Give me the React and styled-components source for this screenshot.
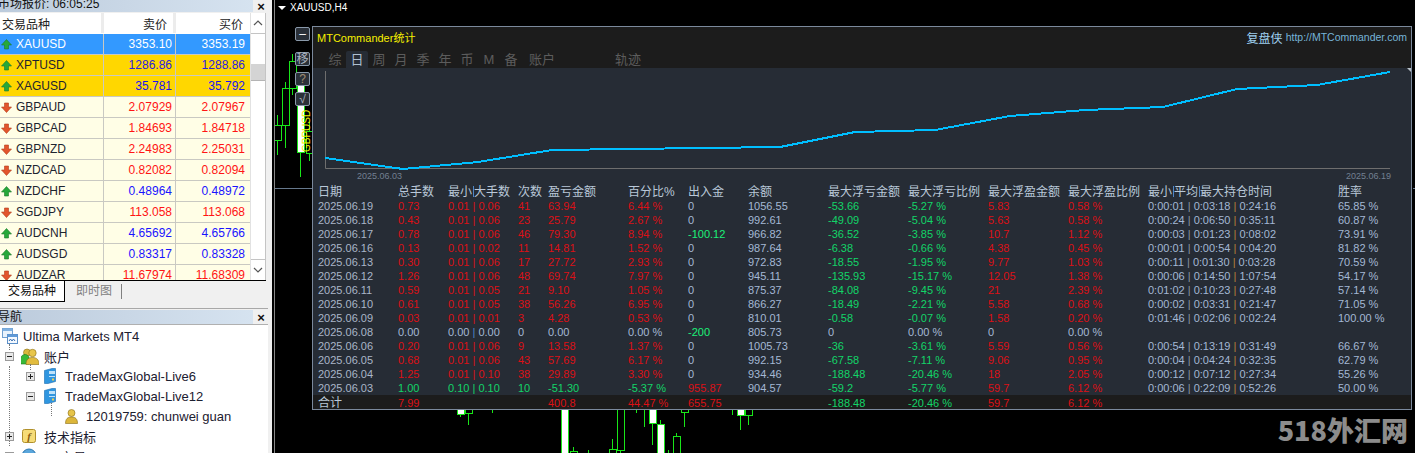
import React from 'react'
import styled, { createGlobalStyle } from 'styled-components'

const GlobalStyle = createGlobalStyle`
  html, body {
    margin: 0;
    padding: 0;
    height: 453px;
    overflow: hidden;
    background: #000;
    font-family: "Liberation Sans", "Noto Sans CJK SC", sans-serif;
  }
`

const Page = styled.div`
  width: 1415px;
  height: 453px;
  display: flex;
  overflow: hidden;
`
const Sidebar = styled.div`
  width: 272px;
  height: 453px;
  flex: none;
  background: #f0f0f0;
  display: flex;
  flex-direction: column;
  overflow: hidden;
`
const TitleBar = styled.div`
  height: ${p => p.$height}px;
  margin-top: ${p => p.$top || 0}px;
  flex: none;
  display: flex;
  align-items: ${p => p.$align || 'center'};
  justify-content: space-between;
  overflow: hidden;
`
const TitleFill = styled.div`
  width: 253px;
  height: 100%;
  background: linear-gradient(90deg, #bccbdc, #d6e3f0);
  font-size: 12px;
  line-height: ${p => p.$line}px;
  color: #111;
  white-space: nowrap;
  overflow: hidden;
  text-indent: ${p => p.$indent || 0}px;
  letter-spacing: ${p => p.$spacing || 0}px;
`
const CloseX = styled.span`
  width: 16px;
  margin-right: 3px;
  text-align: center;
  font-size: 13px;
  line-height: 100%;
  font-weight: 700;
  color: #111;
`
const WatchBody = styled.div`
  height: 267px;
  margin-top: 1px;
  margin-right: 6px;
  display: flex;
  background: #fff;
  overflow: hidden;
  flex: none;
`
const WatchTable = styled.div`
  width: 250px;
  flex: none;
  overflow: hidden;
`
const WatchRow = styled.div`
  height: 21px;
  box-sizing: border-box;
  display: grid;
  grid-template-columns: 104px 72px 74px;
  background: ${p => p.$bg || '#fffee6'};
  border-bottom: 1px solid #c9c9c2;
  color: ${p => p.$color};
  font-size: 12px;
`
const HeadRow = styled(WatchRow)`
  height: 20px;
  margin-bottom: 1px;
  background: #fff;
  border-bottom: none;
  color: #222;
  font-size: 12px;
`
const NameCell = styled.div`
  display: flex;
  align-items: center;
  gap: 4px;
  padding-left: 1px;
  color: ${p => p.$color || '#1d2430'};
  border-right: 1px solid #c9c9c2;
  white-space: nowrap;
`
const PriceCell = styled.div`
  display: flex;
  align-items: center;
  justify-content: flex-end;
  padding-right: ${p => (p.$last ? 5 : 3)}px;
  border-right: ${p => (p.$last ? 'none' : '1px solid #c9c9c2')};
  white-space: nowrap;
`
const HeadName = styled(NameCell)`
  padding-left: 2px;
  border-right: 3px solid #ececec;
  color: #222;
`
const HeadPrice = styled(PriceCell)`
  padding-right: ${p => (p.$last ? 7 : 6)}px;
  border-right: ${p => (p.$last ? 'none' : '3px solid #ececec')};
`
const ScrollBar = styled.div`
  width: 16px;
  flex: none;
  background: #fff;
  border-left: 1px solid #e2e2e2;
  border-right: 1px solid #c4c4c4;
  box-sizing: border-box;
  display: flex;
  flex-direction: column;
  justify-content: space-between;
  position: relative;
`
const ScrollCap = styled.div`
  height: 20px;
  display: flex;
  align-items: center;
  justify-content: center;
  border-bottom: ${p => (p.$top ? '1px solid #c4c4c4' : 'none')};
  border-top: ${p => (p.$top ? 'none' : '1px solid #c4c4c4')};
`
const ScrollThumb = styled.div`
  position: absolute;
  top: 51px;
  left: 0;
  right: 0;
  height: 16px;
  background: #d4d4d4;
  border-bottom: 1px solid #b4b4b4;
`
const TabStrip = styled.div`
  height: 22px;
  flex: none;
  margin-right: 6px;
  border-top: 1px solid #000;
  box-sizing: border-box;
  display: flex;
  align-items: center;
  font-size: 12px;
`
const ActiveTab = styled.div`
  width: 65px;
  height: 21px;
  box-sizing: border-box;
  background: #fff;
  border-right: 1px solid #000;
  border-bottom: 1px solid #000;
  padding-left: 8px;
  line-height: 20px;
  color: #111;
`
const IdleTab = styled.div`
  width: 57px;
  height: 15px;
  box-sizing: border-box;
  padding-left: 11px;
  line-height: 15px;
  color: #808080;
  border-right: 1px solid #808080;
`
const Divider = styled.div`
  height: 6px;
  flex: none;
  border-bottom: 1px solid #a8a8a8;
  margin-right: 4px;
`
const NavBody = styled.div`
  flex: 1;
  background: #fff;
  margin-right: 4px;
  padding-top: 1px;
  border-top: 1px solid #b0b0b0;
  overflow: hidden;
`
const TreeRow = styled.div`
  height: 20px;
  position: relative;
  display: flex;
  align-items: center;
  padding-left: ${p => p.$indent}px;
  font-size: 13px;
  color: #1c2030;
  white-space: nowrap;
`
const Guide = styled.i`
  position: absolute;
  left: ${p => p.$left}px;
  top: ${p => p.$top}px;
  height: ${p => p.$height}px;
  border-left: 1px dotted #777;
`
const Expander = styled.span`
  width: 9px;
  height: 9px;
  box-sizing: border-box;
  border: 1px solid #9a9a9a;
  background: #e8e8e8;
  position: relative;
  flex: none;
  margin-right: ${p => p.$gap}px;
  &::before {
    content: '';
    position: absolute;
    left: 1px;
    right: 1px;
    top: 3px;
    height: 1px;
    background: #222;
  }
  &::after {
    content: '';
    display: ${p => (p.$open ? 'none' : 'block')};
    position: absolute;
    top: 1px;
    bottom: 1px;
    left: 3px;
    width: 1px;
    background: #222;
  }
`
const TreeIcon = styled.svg`
  flex: none;
  margin-right: ${p => p.$gap}px;
`

const ChartPane = styled.div`
  flex: 1;
  margin-left: 2px;
  position: relative;
  background: #000;
  border-left: 1px solid #888;
  overflow: hidden;
`
const CandleLayer = styled.svg`
  position: absolute;
  left: 0;
  top: 0;
`
const ChartLabel = styled.div`
  position: absolute;
  left: 3px;
  top: 2px;
  display: flex;
  align-items: center;
  gap: 4px;
  font-size: 10px;
  line-height: 12px;
  color: #fff;
`
const DownCaret = styled.span`
  width: 0;
  height: 0;
  border-left: 4px solid transparent;
  border-right: 4px solid transparent;
  border-top: 4px solid #fff;
`
const SideButtons = styled.div`
  position: absolute;
  left: 20px;
  top: 27px;
  display: flex;
  flex-direction: column;
  gap: 6px;
`
const SideButton = styled.div`
  width: 15px;
  height: 14px;
  box-sizing: border-box;
  background: #2a3038;
  border: 1px solid #8a99aa;
  border-radius: 2px;
  margin-bottom: ${p => p.$after || 0}px;
  font-size: 12px;
  line-height: 12px;
  text-align: center;
  color: ${p => p.$color || '#aab4c0'};
`
const Watermark = styled.div`
  position: absolute;
  right: 7px;
  bottom: 6px;
  font-family: "Noto Sans CJK SC", sans-serif;
  font-size: 27px;
  line-height: 34px;
  font-weight: 900;
  color: #8c8c8c;
  white-space: nowrap;
`
const Panel = styled.div`
  position: absolute;
  left: 37px;
  top: 26px;
  width: 1100px;
  height: 384px;
  box-sizing: border-box;
  border: 1px solid #7b899c;
  background: #262c35;
  display: flex;
  flex-direction: column;
`
const PanelHead = styled.div`
  height: 41px;
  flex: none;
  background: #1c1c1c;
  display: flex;
  flex-direction: column;
`
const BrandRow = styled.div`
  height: 20px;
  flex: none;
  padding: 0 4px 0 4px;
  display: flex;
  align-items: center;
  justify-content: space-between;
`
const BrandTitle = styled.span`
  font-size: 11px;
  color: #f6f000;
`
const BrandLink = styled.span`
  display: flex;
  align-items: center;
  gap: 3px;
  font-size: 10.5px;
  color: #76b4d8;
  b {
    font-weight: 400;
    font-size: 12px;
    color: #9fd0f0;
  }
`
const TabRow = styled.div`
  height: 17px;
  flex: none;
  margin-top: 4px;
  padding-left: 11px;
  display: flex;
`
const PanelTab = styled.div`
  width: ${p => p.$width || 22}px;
  margin-left: ${p => p.$gap || 0}px;
  text-align: center;
  box-sizing: border-box;
  font-size: 13px;
  line-height: 17px;
  border-radius: 2px 2px 0 0;
  color: ${p => (p.$active ? '#aebfd0' : '#5c5c5c')};
  background: ${p => (p.$active ? '#262c35' : 'transparent')};
`
const Curve = styled.svg`
  flex: none;
  display: block;
`
const Grid = styled.div`
  display: grid;
  grid-template-columns: 80px 50px 70px 30px 80px 60px 60px 80px 80px 80px 80px 80px 190px 1fr;
  padding-left: 5px;
  white-space: nowrap;
`
const HeaderGrid = styled(Grid)`
  height: 14px;
  font-size: 12px;
  line-height: 14px;
  color: #b9c8d8;
`
const DataGrid = styled(Grid)`
  height: 14px;
  font-size: 11px;
  line-height: 14px;
`
const TotalGrid = styled(DataGrid)`
  background: #1c1c1c;
  margin-top: 0;
  height: 14px;
  line-height: 16px;
  font-size: 11px;
`
const Cell = styled.span`
  color: ${p => p.$color};
`
const TotalName = styled(Cell)`
  font-size: 12px;
  color: #b9c8d8;
`
const HeadSep = styled.span`
  display: inline-block;
  width: 1px;
  height: 11px;
  margin: 0 0 0 1px;
  background: #4f86c6;
  vertical-align: -1px;
`

const RED = '#dc1016'
const GREEN = '#12d468'
const BRIGHT = '#1cf078'
const SOFT = '#a4b8d4'
const DATE = '#aab6c8'

const watchRows = [
  { name: 'XAUUSD', sell: '3353.10', buy: '3353.19', up: true, bg: '#3399ff', color: '#fff', nameColor: '#fff' },
  { name: 'XPTUSD', sell: '1286.86', buy: '1288.86', up: true, bg: '#ffd700', color: '#2a22e0' },
  { name: 'XAGUSD', sell: '35.781', buy: '35.792', up: true, bg: '#ffd700', color: '#1a14f0' },
  { name: 'GBPAUD', sell: '2.07929', buy: '2.07967' },
  { name: 'GBPCAD', sell: '1.84693', buy: '1.84718' },
  { name: 'GBPNZD', sell: '2.24983', buy: '2.25031' },
  { name: 'NZDCAD', sell: '0.82082', buy: '0.82094' },
  { name: 'NZDCHF', sell: '0.48964', buy: '0.48972', up: true },
  { name: 'SGDJPY', sell: '113.058', buy: '113.068' },
  { name: 'AUDCNH', sell: '4.65692', buy: '4.65766', up: true },
  { name: 'AUDSGD', sell: '0.83317', buy: '0.83328', up: true },
  { name: 'AUDZAR', sell: '11.67974', buy: '11.68309' },
]

const columns = ['日期', '总手数', null, '次数', '盈亏金额', '百分比%', '出入金', '余额', '最大浮亏金额', '最大浮亏比例', '最大浮盈金额', '最大浮盈比例', 'times', '胜率']

const stats = [
  ['2025.06.19', '0.73', '0.01', '0.06', '41', '63.94', '6.44 %', '0', '1056.55', '-53.66', '-5.27 %', '5.83', '0.58 %', '0:00:01', '0:03:18', '0:24:16', '65.85 %'],
  ['2025.06.18', '0.43', '0.01', '0.06', '23', '25.79', '2.67 %', '0', '992.61', '-49.09', '-5.04 %', '5.63', '0.58 %', '0:00:24', '0:06:50', '0:35:11', '60.87 %'],
  ['2025.06.17', '0.78', '0.01', '0.06', '46', '79.30', '8.94 %', '-100.12', '966.82', '-36.52', '-3.85 %', '10.7', '1.12 %', '0:00:03', '0:01:23', '0:08:02', '73.91 %'],
  ['2025.06.16', '0.13', '0.01', '0.02', '11', '14.81', '1.52 %', '0', '987.64', '-6.38', '-0.66 %', '4.38', '0.45 %', '0:00:01', '0:00:54', '0:04:20', '81.82 %'],
  ['2025.06.13', '0.30', '0.01', '0.06', '17', '27.72', '2.93 %', '0', '972.83', '-18.55', '-1.95 %', '9.77', '1.03 %', '0:00:11', '0:01:30', '0:03:28', '70.59 %'],
  ['2025.06.12', '1.26', '0.01', '0.06', '48', '69.74', '7.97 %', '0', '945.11', '-135.93', '-15.17 %', '12.05', '1.38 %', '0:00:06', '0:14:50', '1:07:54', '54.17 %'],
  ['2025.06.11', '0.59', '0.01', '0.05', '21', '9.10', '1.05 %', '0', '875.37', '-84.08', '-9.45 %', '21', '2.39 %', '0:01:02', '0:10:23', '0:27:48', '57.14 %'],
  ['2025.06.10', '0.61', '0.01', '0.05', '38', '56.26', '6.95 %', '0', '866.27', '-18.49', '-2.21 %', '5.58', '0.68 %', '0:00:02', '0:03:31', '0:21:47', '71.05 %'],
  ['2025.06.09', '0.03', '0.01', '0.01', '3', '4.28', '0.53 %', '0', '810.01', '-0.58', '-0.07 %', '1.58', '0.20 %', '0:01:46', '0:02:06', '0:02:24', '100.00 %'],
  ['2025.06.08', '0.00', '0.00', '0.00', '0', '0.00', '0.00 %', '-200', '805.73', '0', '0.00 %', '0', '0.00 %', '', '', '', ''],
  ['2025.06.06', '0.20', '0.01', '0.06', '9', '13.58', '1.37 %', '0', '1005.73', '-36', '-3.61 %', '5.59', '0.56 %', '0:00:54', '0:13:19', '0:31:49', '66.67 %'],
  ['2025.06.05', '0.68', '0.01', '0.06', '43', '57.69', '6.17 %', '0', '992.15', '-67.58', '-7.11 %', '9.06', '0.95 %', '0:00:04', '0:04:24', '0:32:35', '62.79 %'],
  ['2025.06.04', '1.25', '0.01', '0.10', '38', '29.89', '3.30 %', '0', '934.46', '-188.48', '-20.46 %', '18', '2.05 %', '0:00:12', '0:07:12', '0:27:34', '55.26 %'],
  ['2025.06.03', '1.00', '0.10', '0.10', '10', '-51.30', '-5.37 %', '955.87', '904.57', '-59.2', '-5.77 %', '59.7', '6.12 %', '0:00:06', '0:22:09', '0:52:26', '50.00 %'],
]

const curve = [
  [325, 158], [403, 169], [478, 162], [552, 150], [628, 149], [703, 148], [780, 147], [855, 132],
  [935, 130], [1010, 116], [1085, 110], [1163, 107], [1237, 89], [1317, 85], [1390, 72],
]

// x, body top, body bottom, wick top, wick bottom, filled
const candles = [
  [276, 125, 140, 115, 155], [284, 88, 125, 82, 148], [291, 61, 88, 54, 95], [299, 85, 152, 85, 177, true], [308, 131, 153, 122, 161],
  [459, 409, 414, 409, 417, true], [467, 409, 413, 409, 425], [491, 409, 409, 409, 413], [563, 409, 454, 409, 454, true],
  [572, 451, 454, 447, 454], [587, 454, 454, 450, 454], [611, 449, 454, 439, 454], [619, 409, 450, 409, 454],
  [635, 409, 409, 409, 413], [643, 409, 409, 409, 427], [651, 409, 423, 409, 445, true], [659, 424, 454, 420, 454, true],
  [667, 454, 454, 450, 454], [675, 436, 454, 433, 454], [683, 409, 412, 409, 427],
  [731, 409, 409, 409, 415], [739, 409, 415, 409, 430, true], [747, 409, 415, 409, 425],
]

const TrendArrow = ({ up }) => (
  <svg width="11" height="11" viewBox="0 0 11 11" style={{ flex: 'none' }}>
    <path
      d={up ? 'M5.5 .5 10.5 6H7.5V10H3.5V6H.5Z' : 'M3.5 1H7.5V5H10.5L5.5 10.5 .5 5H3.5Z'}
      fill={up ? '#27a83a' : '#e2552c'}
      stroke={up ? '#1c7a2c' : '#b23c1c'}
      strokeWidth=".6"
    />
  </svg>
)

const ChevronMark = ({ up }) => (
  <svg width="10" height="6" viewBox="0 0 10 6">
    <path d={up ? 'M1 5 5 1 9 5' : 'M1 1 5 5 9 1'} fill="none" stroke="#555" strokeWidth="1.2" />
  </svg>
)

const WindowsIcon = () => (
  <TreeIcon width="16" height="16" viewBox="0 0 16 16" $gap={5}>
    <rect x=".5" y=".5" width="10" height="9" fill="#e8f2fc" stroke="#6f9fd0" />
    <rect x=".5" y=".5" width="10" height="2.5" fill="#7fb0e0" />
    <rect x="5.5" y="6.5" width="10" height="9" fill="#f4f9ff" stroke="#5b8fc8" />
    <rect x="5.5" y="6.5" width="10" height="2.5" fill="#5f9ad8" />
    <path d="M7 13l1.5-2 1.5 2 1.5-2 1.5 2" fill="none" stroke="#3a6fb0" />
  </TreeIcon>
)

const UsersIcon = () => (
  <TreeIcon width="18" height="17" viewBox="0 0 18 17" $gap={5}>
    <circle cx="6" cy="4.5" r="3.5" fill="#d9b83c" stroke="#8a6d14" strokeWidth=".6" />
    <path d="M0 16a4 5 0 0 1 8-7v7z" fill="#38b838" stroke="#1c7a1c" strokeWidth=".6" />
    <circle cx="11.5" cy="5" r="3.7" fill="#e8c64a" stroke="#8a6d14" strokeWidth=".6" />
    <path d="M5 16.5c0-5 2.5-7 6.5-7s6.5 2 6.5 7z" fill="#e2bc3e" stroke="#8a6d14" strokeWidth=".6" />
  </TreeIcon>
)

const ServerIcon = () => (
  <TreeIcon width="12" height="16" viewBox="0 0 12 16" $gap={9}>
    <path d="M.5 2.5 8 .5h3.5v13L4 15.5H.5z" fill="#2f96e0" stroke="#1a6cb0" strokeWidth=".6" />
    <rect x="5" y="3" width="6" height="3" fill="#bfe2fa" />
    <rect x="5" y="8" width="6" height="1" fill="#bfe2fa" />
    <rect x="8" y="10.5" width="2" height="2" fill="#f0d050" />
  </TreeIcon>
)

const UserIcon = () => (
  <TreeIcon width="13" height="15" viewBox="0 0 13 15" $gap={8}>
    <circle cx="6.5" cy="4" r="3.5" fill="#e6c44a" stroke="#8a6d14" strokeWidth=".6" />
    <path d="M.5 14.5c0-4.5 2-6.5 6-6.5s6 2 6 6.5z" fill="#dcb63a" stroke="#8a6d14" strokeWidth=".6" />
  </TreeIcon>
)

const FormulaIcon = () => (
  <TreeIcon width="14" height="14" viewBox="0 0 14 14" $gap={8}>
    <rect x=".5" y=".5" width="13" height="13" rx="2" fill="#f6dc78" stroke="#b0902c" />
    <text x="7" y="11" textAnchor="middle" fontSize="11" fontStyle="italic" fontWeight="700" fontFamily="Liberation Serif, serif" fill="#8a5c10">f</text>
  </TreeIcon>
)

const GlobeIcon = () => (
  <TreeIcon width="16" height="16" viewBox="0 0 16 16" $gap={6}>
    <circle cx="8" cy="8" r="7" fill="#5aa6dc" stroke="#2f78b0" />
  </TreeIcon>
)

const MarketWatch = () => (
  <>
    <TitleBar $height={12}>
      <TitleFill $line={8} $indent={-2}>市场报价: 06:05:25</TitleFill>
      <CloseX>×</CloseX>
    </TitleBar>
    <WatchBody>
      <WatchTable>
        <HeadRow>
          <HeadName>交易品种</HeadName>
          <HeadPrice>卖价</HeadPrice>
          <HeadPrice $last>买价</HeadPrice>
        </HeadRow>
        {watchRows.map(row => {
          const color = row.color || (row.up ? '#1a14ff' : '#ff1414')
          return (
            <WatchRow key={row.name} $bg={row.bg} $color={color}>
              <NameCell $color={row.nameColor}>
                <TrendArrow up={row.up} />
                {row.name}
              </NameCell>
              <PriceCell>{row.sell}</PriceCell>
              <PriceCell $last>{row.buy}</PriceCell>
            </WatchRow>
          )
        })}
      </WatchTable>
      <ScrollBar>
        <ScrollCap $top><ChevronMark up /></ScrollCap>
        <ScrollThumb />
        <ScrollCap><ChevronMark /></ScrollCap>
      </ScrollBar>
    </WatchBody>
    <TabStrip>
      <ActiveTab>交易品种</ActiveTab>
      <IdleTab>即时图</IdleTab>
    </TabStrip>
  </>
)

const Navigator = () => (
  <>
    <Divider />
    <TitleBar $height={14} $top={1}>
      <TitleFill $line={14} $indent={-2}>导航</TitleFill>
      <CloseX>×</CloseX>
    </TitleBar>
    <NavBody>
      <TreeRow $indent={2}><WindowsIcon />Ultima Markets MT4</TreeRow>
      <TreeRow $indent={5}>
        <Guide $left={9} $top={-2} $height={6} />
        <Expander $open $gap={7} />
        <UsersIcon />账户
      </TreeRow>
      <TreeRow $indent={26}>
        <Guide $left={9} $top={0} $height={80} />
        <Guide $left={30} $top={-2} $height={6} />
        <Expander $gap={9} />
        <ServerIcon />TradeMaxGlobal-Live6
      </TreeRow>
      <TreeRow $indent={26}>
        <Expander $open $gap={9} />
        <ServerIcon />TradeMaxGlobal-Live12
      </TreeRow>
      <TreeRow $indent={65}>
        <Guide $left={51} $top={-3} $height={13} />
        <UserIcon />12019759: chunwei guan
      </TreeRow>
      <TreeRow $indent={5}>
        <Expander $gap={8} />
        <FormulaIcon />技术指标
      </TreeRow>
      <TreeRow $indent={5}>
        <Expander $gap={7} />
        <GlobeIcon />EA交易
      </TreeRow>
    </NavBody>
  </>
)

const Candles = () => (
  <CandleLayer width="1141" height="453" viewBox="274 0 1141 453">
    {candles.map(([x, top, bottom, wickTop, wickBottom, filled]) => (
      <g key={x} shapeRendering="crispEdges">
        <line x1={x + 0.5} x2={x + 0.5} y1={wickTop} y2={wickBottom} stroke="#19e619" />
        {bottom > top && (
          <rect x={x - 3} y={top + 0.5} width="7" height={bottom - top} fill={filled ? '#fff' : '#000'} stroke="#19e619" />
        )}
      </g>
    ))}
    <text
      transform="rotate(-90 309 152)"
      x="309"
      y="152"
      fontSize="10"
      fontFamily="Liberation Sans, sans-serif"
      fill="#f4f000"
    >
      GBPUSD
    </text>
    <line x1="274" x2="313" y1="188.5" y2="188.5" stroke="#66788c" />
    <line x1="1412" x2="1415" y1="188.5" y2="188.5" stroke="#66788c" />
    <line x1="1414.5" x2="1414.5" y1="250" y2="282" stroke="#19e619" />
  </CandleLayer>
)

const EquityCurve = () => (
  <Curve width="1098" height="117" viewBox="313 68 1098 117">
    <path d="M325.5 71V168.5H1390" fill="none" stroke="#6e6e6e" />
    <polyline
      points={curve.map(p => p.join(',')).join(' ')}
      fill="none"
      stroke="#00bfff"
      strokeWidth="2"
      shapeRendering="crispEdges"
    />
    <text x="357" y="179" fontSize="9" fontFamily="Liberation Sans, sans-serif" fill="#738092">2025.06.03</text>
    <text x="1346" y="179" fontSize="9" fontFamily="Liberation Sans, sans-serif" fill="#738092">2025.06.19</text>
    <path d="M1411 64 1407 68 1411 72Z" fill="#b8c0c8" />
  </Curve>
)

const Separated = ({ parts, colors }) => (
  <>
    {parts.map((part, i) => (
      <React.Fragment key={i}>
        {i > 0 && <span style={{ color: colors[i - 1] }}> | </span>}
        {part}
      </React.Fragment>
    ))}
  </>
)

const StatRow = ({ row }) => {
  const [date, lots, min, max, count, pnl, pct, flow, balance, loss, lossPct, gain, gainPct, t1, t2, t3, rate] = row
  const empty = lots === '0.00'
  const losing = pnl.startsWith('-')
  const lotColor = empty ? SOFT : losing ? GREEN : RED
  const flowColor = flow === '0' ? SOFT : flow.startsWith('-') ? BRIGHT : RED
  return (
    <DataGrid>
      <Cell $color={DATE}>{date}</Cell>
      <Cell $color={lotColor}>{lots}</Cell>
      <Cell $color={lotColor}>
        <Separated parts={[min, max]} colors={[empty ? '#4f86c6' : lotColor]} />
      </Cell>
      <Cell $color={lotColor}>{count}</Cell>
      <Cell $color={lotColor}>{pnl}</Cell>
      <Cell $color={lotColor}>{pct}</Cell>
      <Cell $color={flowColor}>{flow}</Cell>
      <Cell $color={SOFT}>{balance}</Cell>
      <Cell $color={empty ? SOFT : GREEN}>{loss}</Cell>
      <Cell $color={empty ? SOFT : GREEN}>{lossPct}</Cell>
      <Cell $color={empty ? SOFT : RED}>{gain}</Cell>
      <Cell $color={empty ? SOFT : RED}>{gainPct}</Cell>
      <Cell $color={SOFT}>
        {t1 && <Separated parts={[t1, t2, t3]} colors={['#8a94a4', '#b5803c']} />}
      </Cell>
      <Cell $color={SOFT}>{rate}</Cell>
    </DataGrid>
  )
}

const StatsPanel = () => (
  <Panel>
    <PanelHead>
      <BrandRow>
        <BrandTitle>MTCommander统计</BrandTitle>
        <BrandLink><b>复盘侠</b>http://MTCommander.com</BrandLink>
      </BrandRow>
      <TabRow>
        {['综', '日', '周', '月', '季', '年', '币', 'M', '备'].map(label => (
          <PanelTab key={label} $active={label === '日'}>{label}</PanelTab>
        ))}
        <PanelTab $width={40}>账户</PanelTab>
        <PanelTab $width={40} $gap={46}>轨迹</PanelTab>
      </TabRow>
    </PanelHead>
    <EquityCurve />
    <HeaderGrid>
      {columns.map((title, i) => {
        if (title === null) return <span key={i}>最小<HeadSep />大手数</span>
        if (title === 'times') return <span key={i}>最小<HeadSep />平均<HeadSep />最大持仓时间</span>
        return <span key={i}>{title}</span>
      })}
    </HeaderGrid>
    {stats.map(row => <StatRow key={row[0]} row={row} />)}
    <TotalGrid>
      <TotalName>合计</TotalName>
      <Cell $color={RED}>7.99</Cell>
      <Cell />
      <Cell />
      <Cell $color={RED}>400.8</Cell>
      <Cell $color={RED}>44.47 %</Cell>
      <Cell $color={RED}>655.75</Cell>
      <Cell />
      <Cell $color={GREEN}>-188.48</Cell>
      <Cell $color={GREEN}>-20.46 %</Cell>
      <Cell $color={RED}>59.7</Cell>
      <Cell $color={RED}>6.12 %</Cell>
    </TotalGrid>
  </Panel>
)

export default function App() {
  return (
    <Page>
      <GlobalStyle />
      <Sidebar>
        <MarketWatch />
        <Navigator />
      </Sidebar>
      <ChartPane>
        <Candles />
        <ChartLabel><DownCaret />XAUUSD,H4</ChartLabel>
        <SideButtons>
          <SideButton $after={5} $color="#fff">–</SideButton>
          <SideButton>移</SideButton>
          <SideButton $color="#a08c70">?</SideButton>
          <SideButton>√</SideButton>
        </SideButtons>
        <StatsPanel />
        <Watermark>518外汇网</Watermark>
      </ChartPane>
    </Page>
  )
}
